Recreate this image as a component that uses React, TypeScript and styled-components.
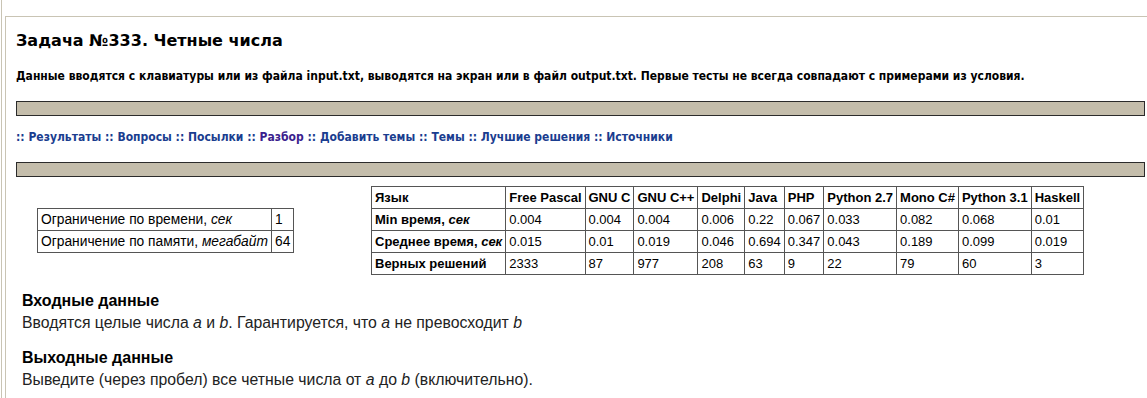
import React from 'react';
import styled, { createGlobalStyle } from 'styled-components';

const LANGS = [
  { name: 'Free Pascal', min: '0.004', avg: '0.015', ok: '2333' },
  { name: 'GNU C', min: '0.004', avg: '0.01', ok: '87' },
  { name: 'GNU C++', min: '0.004', avg: '0.019', ok: '977' },
  { name: 'Delphi', min: '0.006', avg: '0.046', ok: '208' },
  { name: 'Java', min: '0.22', avg: '0.694', ok: '63' },
  { name: 'PHP', min: '0.067', avg: '0.347', ok: '9' },
  { name: 'Python 2.7', min: '0.033', avg: '0.043', ok: '22' },
  { name: 'Mono C#', min: '0.082', avg: '0.189', ok: '79' },
  { name: 'Python 3.1', min: '0.068', avg: '0.099', ok: '60' },
  { name: 'Haskell', min: '0.01', avg: '0.019', ok: '3' },
];

const LINKS = [
  { label: 'Результаты' },
  { label: 'Вопросы' },
  { label: 'Посылки' },
  { label: 'Разбор', visited: true },
  { label: 'Добавить темы' },
  { label: 'Темы' },
  { label: 'Лучшие решения' },
  { label: 'Источники' },
];

const GlobalStyle = createGlobalStyle`
  body {
    margin: 0;
    background: #fff;
    color: #000;
    font-family: "DejaVu Sans", Verdana, sans-serif;
  }
`;

export default function App() {
  return (
    <>
      <GlobalStyle />
      <Frame>
        <Panel>
          <Title>Задача №333. Четные числа</Title>
          <Notice>
            Данные вводятся с клавиатуры или из файла input.txt, выводятся на экран или в файл output.txt. Первые
            тесты не всегда совпадают с примерами из условия.
          </Notice>
          <Bar />
          <Nav>
            {LINKS.map((l) => (
              <React.Fragment key={l.label}>
                :: <NavLink $visited={!!l.visited}>{l.label}</NavLink>{' '}
              </React.Fragment>
            ))}
          </Nav>
          <Bar />
          <StatsRow>
            <LimitsWrap>
              <Grid $size={13.8}>
                <tbody>
                  <tr>
                    <td>
                      Ограничение по времени, <i>сек</i>
                    </td>
                    <td>1</td>
                  </tr>
                  <tr>
                    <td>
                      Ограничение по памяти, <i>мегабайт</i>
                    </td>
                    <td>64</td>
                  </tr>
                </tbody>
              </Grid>
            </LimitsWrap>
            <Grid $size={13}>
              <tbody>
                <tr>
                  <th>Язык</th>
                  {LANGS.map((l) => (
                    <th key={l.name}>{l.name}</th>
                  ))}
                </tr>
                <tr>
                  <th>
                    Min время, <i>сек</i>
                  </th>
                  {LANGS.map((l) => (
                    <td key={l.name}>{l.min}</td>
                  ))}
                </tr>
                <tr>
                  <th>
                    Среднее время, <i>сек</i>
                  </th>
                  {LANGS.map((l) => (
                    <td key={l.name}>{l.avg}</td>
                  ))}
                </tr>
                <tr>
                  <th>Верных решений</th>
                  {LANGS.map((l) => (
                    <td key={l.name}>{l.ok}</td>
                  ))}
                </tr>
              </tbody>
            </Grid>
          </StatsRow>
          <Section>
            <SectionTitle>Входные данные</SectionTitle>
            <SectionText>
              Вводятся целые числа <i>a</i> и <i>b</i>. Гарантируется, что <i>a</i> не превосходит <i>b</i>
            </SectionText>
          </Section>
          <Section>
            <SectionTitle>Выходные данные</SectionTitle>
            <SectionText>
              Выведите (через пробел) все четные числа от <i>a</i> до <i>b</i> (включительно).
            </SectionText>
          </Section>
        </Panel>
      </Frame>
    </>
  );
}

const Frame = styled.div`
  margin-left: 1px;
  border-left: 1px solid #c9c4b4;
  padding-left: 3px;
  padding-top: 16px;
`;

const Panel = styled.div`
  border-left: 1px solid #c9c4b4;
  border-top: 1px solid #c9c4b4;
  padding: 13px 2px 20px 10px;
`;

const Title = styled.h1`
  margin: 0;
  font-size: 16px;
  font-weight: bold;
  line-height: 22px;
`;

const Notice = styled.p`
  margin: 17px 0 0;
  font-family: "DejaVu Sans Condensed", "DejaVu Sans", sans-serif;
  font-stretch: condensed;
  font-size: 12px;
  font-weight: bold;
  line-height: 15px;
`;

const Bar = styled.div`
  height: 13px;
  margin-top: 17px;
  background: #c4bdab;
  border: 1px solid #2b2b2b;
`;

const Nav = styled.div`
  margin: 13px 0 11px;
  font-family: "DejaVu Sans Condensed", "DejaVu Sans", sans-serif;
  font-stretch: condensed;
  font-size: 12px;
  font-weight: bold;
  line-height: 16px;
  color: #1a3d8f;
`;

const NavLink = styled.a<{ $visited: boolean }>`
  color: ${(p) => (p.$visited ? '#3b1e8e' : '#1a3d8f')};
  text-decoration: none;
  cursor: pointer;
`;

const StatsRow = styled.div`
  display: flex;
  align-items: center;
  margin-top: 9px;
`;

const LimitsWrap = styled.div`
  width: 355px;
  padding-left: 21px;
  box-sizing: border-box;
`;

const Grid = styled.table<{ $size: number }>`
  border-collapse: collapse;
  border: 1px solid #333;
  font-family: "Liberation Sans", Arial, sans-serif;
  font-size: ${(p) => p.$size}px;

  td,
  th {
    border: 1px solid #555;
    padding: 0 3px;
    height: 21px;
    text-align: left;
    white-space: nowrap;
  }

  th {
    font-weight: bold;
  }
`;

const Section = styled.div`
  margin-top: 16px;
  padding-left: 6px;
  font-family: "Liberation Sans", Arial, sans-serif;

  & + & {
    margin-top: 15px;
  }
`;

const SectionTitle = styled.div`
  font-size: 16px;
  font-weight: bold;
  line-height: 20px;
`;

const SectionText = styled.div`
  margin-top: 2px;
  font-size: 15.8px;
  line-height: 20px;
  color: #222;
`;
